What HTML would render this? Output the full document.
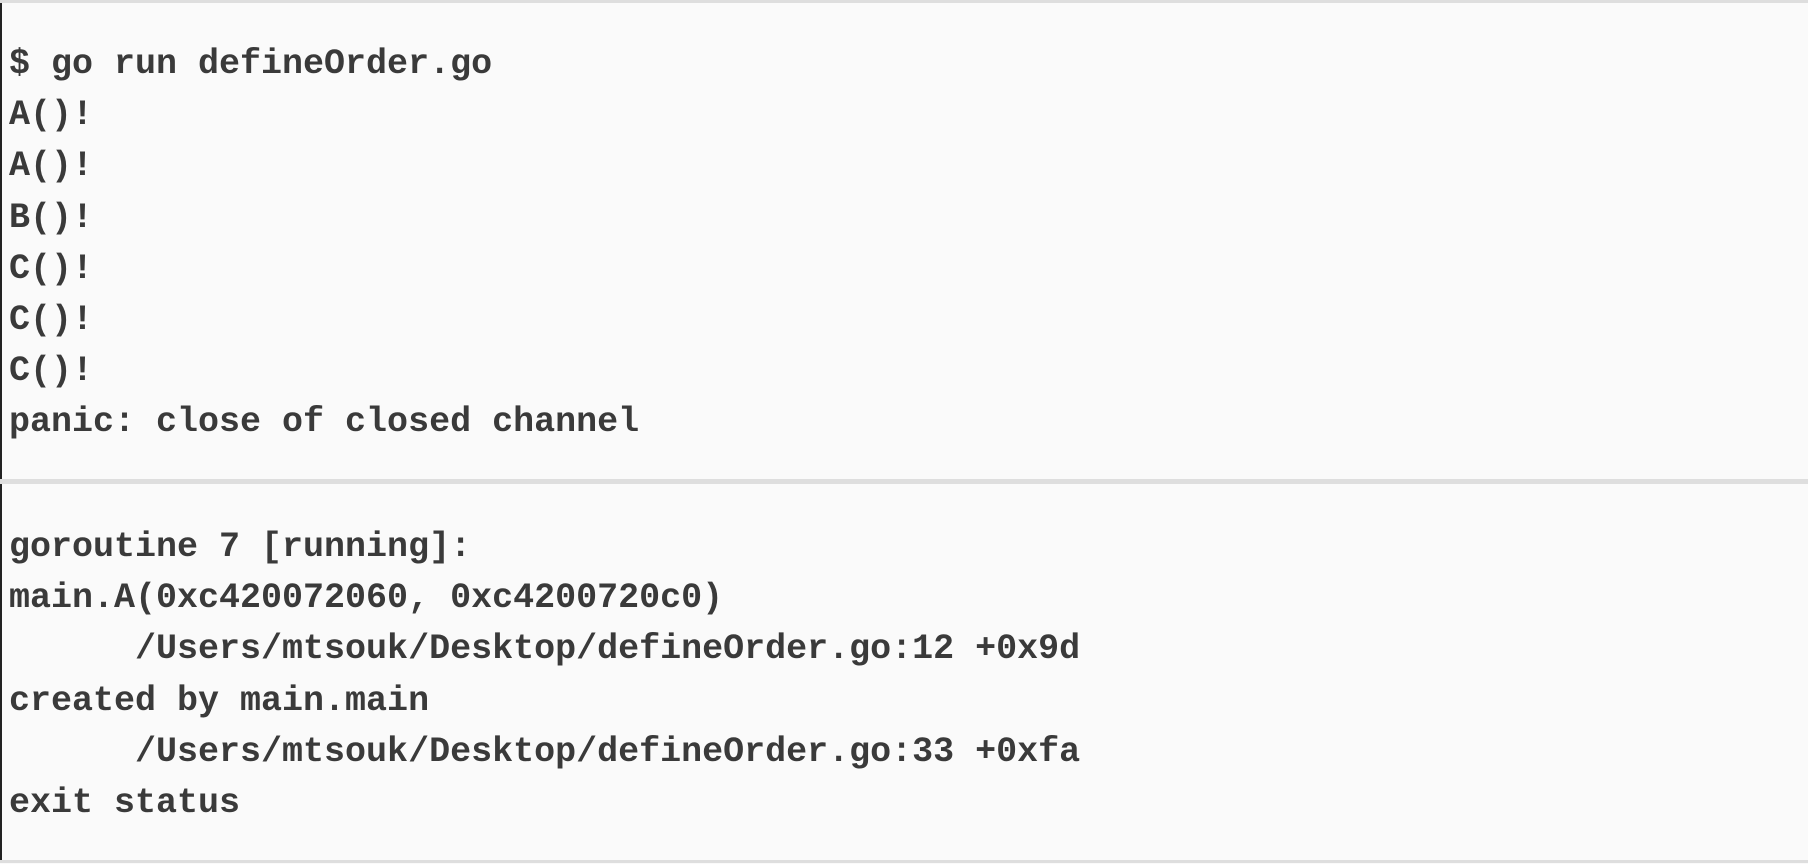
<!DOCTYPE html>
<html><head><style>
html,body{margin:0;padding:0;background:#fff;width:1816px;height:864px;overflow:hidden}
.wrap{position:absolute;left:0;top:0;width:1808px;height:864px;background:#fafafa}
.hr{position:absolute;left:0;width:1808px;background:#dedede}
.vl{position:absolute;left:0;width:2px;background:#222}
pre{position:absolute;left:9px;margin:0;font-family:"Liberation Mono",monospace;font-weight:bold;font-size:35px;line-height:51.2px;color:#3a3a3a;white-space:pre}
</style></head><body>
<div class="wrap"></div>
<div class="hr" style="top:0;height:3px"></div>
<div class="hr" style="top:479px;height:5px"></div>
<div class="hr" style="top:860px;height:3px"></div>
<div class="vl" style="top:3px;height:476px"></div>
<div class="vl" style="top:484px;height:376px"></div>
<pre style="top:39px">$ go run defineOrder.go
A()!
A()!
B()!
C()!
C()!
C()!
panic: close of closed channel</pre>
<pre style="top:522px">goroutine 7 [running]:
main.A(0xc420072060, 0xc4200720c0)
      /Users/mtsouk/Desktop/defineOrder.go:12 +0x9d
created by main.main
      /Users/mtsouk/Desktop/defineOrder.go:33 +0xfa
exit status</pre>
</body></html>
